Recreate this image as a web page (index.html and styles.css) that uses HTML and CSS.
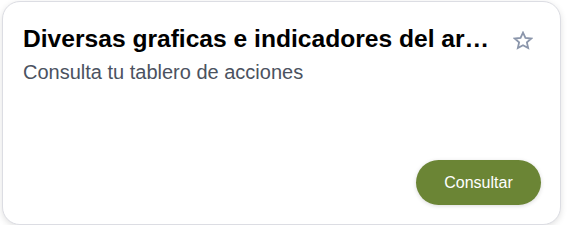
FILE: index.html
```html
<!DOCTYPE html>
<html lang="es">
<head>
<meta charset="utf-8">
<link rel="stylesheet" href="styles.css">
</head>
<body>
<div class="card">
  <div class="head">
    <h2 class="title">Diversas graficas e indicadores del area de operaciones</h2>
    <button class="star" aria-label="Favorito">
      <svg width="20" height="20" viewBox="0 0 20 20"><path d="M10 1.6l2.45 5.3 5.8.6-4.35 3.9 1.25 5.7L10 14.2l-5.15 2.9 1.25-5.7L1.75 7.5l5.8-.6z" fill="none" stroke="#8b96ab" stroke-width="1.8" stroke-linejoin="miter"/></svg>
    </button>
  </div>
  <p class="sub">Consulta tu tablero de acciones</p>
  <div class="foot">
    <button class="btn">Consultar</button>
  </div>
</div>
</body>
</html>
```
FILE: styles.css
```css
html, body { margin: 0; padding: 0; background: #ffffff; }
body { font-family: "Liberation Sans", Arial, sans-serif; }
.card {
  box-sizing: border-box;
  margin: 1px 0 0 2px;
  width: 559px;
  height: 224px;
  border: 1px solid #dcdde3;
  border-radius: 18px;
  background: #fff;
  box-shadow: 0 2px 6px rgba(0,0,0,0.12);
  padding: 23px 19px 19px 20px;
  display: flex;
  flex-direction: column;
}
.head { display: flex; align-items: flex-start; gap: 22px; }
.title {
  margin: 0;
  flex: 1;
  min-width: 0;
  font-size: 24.6px;
  font-weight: bold;
  color: #000;
  white-space: nowrap;
  overflow: hidden;
  text-overflow: ellipsis;
  line-height: 28px;
}
.star {
  border: 0; background: none; padding: 0; margin: 6px 8px 0 0;
  width: 20px; height: 20px; display: flex;
}
.sub { margin: 7px 0 0; font-size: 20px; color: #4b5260; line-height: 24px; }
.foot { margin-top: auto; display: flex; justify-content: flex-end; }
.btn {
  border: 0;
  background: #6b8535;
  color: #fff;
  font-family: "Liberation Sans", Arial, sans-serif;
  font-size: 16px;
  height: 45px;
  width: 125px;
  border-radius: 23px;
  box-shadow: 0 1px 4px rgba(0,0,0,0.15);
}
```
